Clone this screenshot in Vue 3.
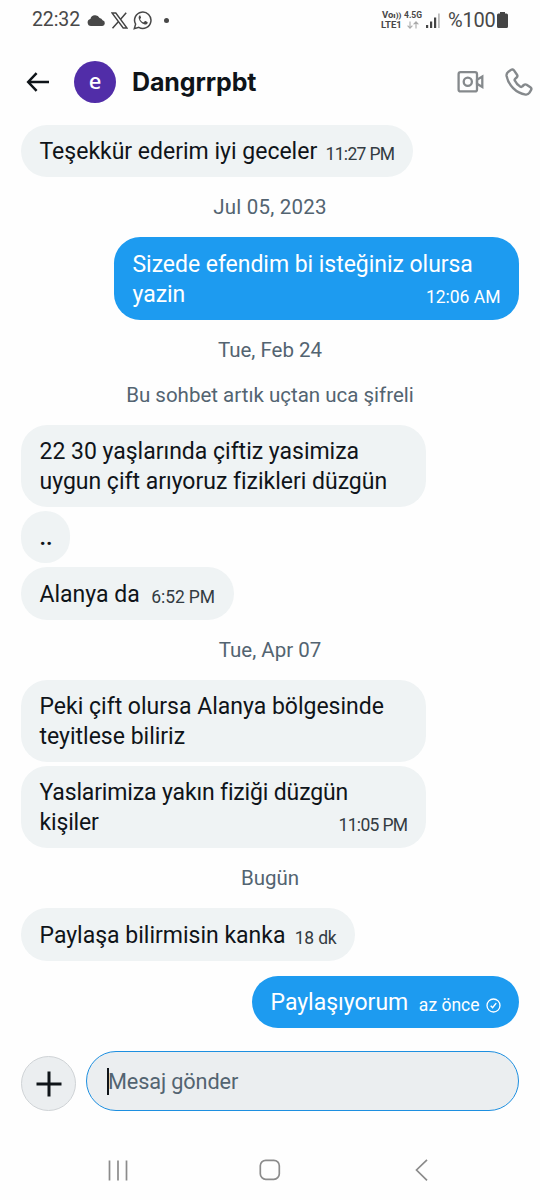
<script setup>
// `ls` / `tls` are tracking values in px for the message text and its timestamp.
const feed = [
  { items: [{ lines: ['Teşekkür ederim iyi geceler'], time: '11:27 PM', tls: -0.65, w: 392 }] },
  { date: 'Jul 05, 2023', ls: 0.2 },
  { own: true, items: [{ lines: ['Sizede efendim bi isteğiniz olursa', 'yazin'], ls: -0.04, time: '12:06 AM', w: 405 }] },
  { date: 'Tue, Feb 24' },
  { date: 'Bu sohbet artık uçtan uca şifreli' },
  {
    items: [
      { lines: ['22 30 yaşlarında çiftiz yasimiza', 'uygun çift arıyoruz fizikleri düzgün'], ls: -0.01, w: 405 },
      { lines: ['..'], w: 49, bold: true },
      { lines: ['Alanya da'], time: '6:52 PM', tls: -0.1, w: 212.5 },
    ],
  },
  { date: 'Tue, Apr 07' },
  {
    items: [
      { lines: ['Peki çift olursa Alanya bölgesinde', 'teyitlese biliriz'], w: 405 },
      { lines: ['Yaslarimiza yakın fiziği düzgün', 'kişiler'], ls: -0.15, time: '11:05 PM', tls: -0.65, w: 405 },
    ],
  },
  { date: 'Bugün' },
  { items: [{ lines: ['Paylaşa bilirmisin kanka'], time: '18 dk', tls: -0.2, w: 334 }] },
  { own: true, items: [{ lines: ['Paylaşıyorum'], time: 'az önce', sent: true, w: 267 }] },
]
</script>

<template>
  <div class="screen">
    <div class="status">
      <span class="clock">22:32</span>
      <svg class="cloud" width="18" height="11" viewBox="0 0 18 11"><path d="M4 11a3.6 3.6 0 0 1-.6-7.1A5 5 0 0 1 12.6 3a4 4 0 0 1 3 2.3A2.9 2.9 0 0 1 15.3 11z" fill="#484848" /></svg>
      <svg class="xlogo" width="17" height="17" viewBox="0 0 17 17" fill="none" stroke="#444"><path d="M1 1h3.8l11.2 15h-3.8z" stroke-width="1.4" /><path d="M15.2.8 9.4 7.4M7.3 9.8 1.5 16.2" stroke-width="1.5" /></svg>
      <svg class="wa" width="20" height="20" viewBox="0 0 20 20"><path d="M1.3 18.7l1.3-4.5a8.2 8.2 0 1 1 3.2 3.2z" fill="none" stroke="#484848" stroke-width="1.5" /><path d="M6.9 5.3c-.9.5-1.5 1.6-1.2 2.9.7 3.2 3.2 5.5 6.3 6.2 1.2.2 2.4-.5 2.7-1.5.1-.5 0-.8-.4-1l-1.7-.8c-.4-.2-.7-.1-.9.2l-.6.8c-.2.2-.4.3-.7.2-1.4-.6-2.5-1.6-3.2-2.9-.1-.3-.1-.5.1-.7l.6-.7c.1-.2.2-.4.1-.7l-.8-1.8c-.1-.3-.2-.3-.3-.2z" fill="#484848" /></svg>
      <i class="dot"></i>
      <div class="net volte"><span>Vo<b>ı))</b></span><span>LTE1</span></div>
      <div class="net gen">
        <span>4.5G</span>
        <svg width="12" height="8" viewBox="0 0 12 8" fill="none" stroke="#aaa" stroke-width="1.1"><path d="M3 .5v6.5M.6 4.7 3 7.2l2.4-2.5M9 7.5V1M6.6 3.3 9 .8l2.4 2.5" /></svg>
      </div>
      <svg class="signal" width="14" height="15" viewBox="0 0 14 15"><path d="M0 12h2.2v3H0zM4 8.5h2.2V15H4zM8 4.5h2.2V15H8z" fill="#444" /><path d="M12 .5h1.8V15H12z" fill="#bbb" /></svg>
      <span class="percent">%100</span>
      <svg class="battery" width="11" height="16" viewBox="0 0 11 16"><path d="M3 0h5v1.6h1.5A1.5 1.5 0 0 1 11 3.1v11.4A1.5 1.5 0 0 1 9.5 16h-8A1.5 1.5 0 0 1 0 14.5V3.1a1.5 1.5 0 0 1 1.5-1.5H3z" fill="#444" /></svg>
    </div>

    <header class="header">
      <svg class="back" width="24" height="20" viewBox="0 0 24 20" fill="none" stroke="#0f1419" stroke-width="2.5"><path d="M10.6 1.2 2.2 10l8.4 8.8M2.2 10H23" /></svg>
      <div class="avatar">e</div>
      <h1>Dangrrpbt</h1>
      <svg class="video" width="28" height="24" viewBox="0 0 28 24" fill="none" stroke="#85898c" stroke-width="2.3"><rect x="1.6" y="2.2" width="18.4" height="19.2" rx="2" /><circle cx="10.8" cy="11.8" r="4.1" /><path d="M20 9.8 25.3 6.6v10.4L20 13.8z" /></svg>
      <svg class="phone" width="28" height="29" viewBox="0 0 28 29" fill="none" stroke="#85898c" stroke-width="2.4" stroke-linejoin="round"><path d="M3.4 3.8 6 1.9c1-.7 2.3-.5 3 .5l3 4.3c.6.9.4 2.1-.4 2.8l-1.5 1.3c-.5.5-.6 1.2-.3 1.8 1.2 2.6 3.1 4.7 5.6 6.1.6.3 1.3.3 1.8-.2l1.6-1.5c.8-.7 1.9-.8 2.8-.2l3.8 2.5c1 .7 1.2 1.9.6 2.9l-1.5 2.5c-.9 1.4-2.3 2.1-3.9 1.9C10.9 25.2 3.4 17 1.6 8c-.3-1.7.4-3.2 1.8-4.2z" /></svg>
    </header>

    <main class="feed">
      <template v-for="(g, i) in feed" :key="i">
        <p v-if="g.date" class="date" :style="{ letterSpacing: (g.ls || 0) + 'px' }">{{ g.date }}</p>
        <div v-else class="group" :class="{ own: g.own }">
          <div v-for="(m, j) in g.items" :key="j" class="bubble" :style="{ width: m.w + 'px' }">
            <div class="text" :class="{ bold: m.bold }" :style="{ letterSpacing: (m.ls || 0) + 'px' }">
              <span v-for="l in m.lines" :key="l">{{ l }}</span>
            </div>
            <div v-if="m.time" class="time">
              <span :style="{ letterSpacing: (m.tls || 0) + 'px' }">{{ m.time }}</span>
              <svg v-if="m.sent" width="15" height="15" viewBox="0 0 15 15" fill="none" stroke="#fff" stroke-width="1.3"><circle cx="7.5" cy="7.5" r="6.5" /><path d="m4.7 7.8 1.9 1.9 3.6-4.6" stroke-width="1.5" /></svg>
            </div>
          </div>
        </div>
      </template>
    </main>

    <div class="composer">
      <div class="add"><svg width="26" height="26" viewBox="0 0 26 26" stroke="#0f1419" stroke-width="3"><path d="M13 .5v25M.5 13h25" /></svg></div>
      <div class="input"><i class="caret"></i><span>Mesaj gönder</span></div>
    </div>

    <nav class="nav">
      <svg width="20" height="21" viewBox="0 0 20 21" stroke="#8b8b8b" stroke-width="1.7"><path d="M1.5.5v20M10 .5v20M18.5.5v20" /></svg>
      <svg width="22" height="22" viewBox="0 0 22 22" fill="none" stroke="#8b8b8b" stroke-width="1.7"><rect x="1.3" y="1.3" width="19" height="19" rx="5.5" /></svg>
      <svg width="13" height="22" viewBox="0 0 13 22" fill="none" stroke="#8b8b8b" stroke-width="1.7"><path d="M12 .8 1.5 11 12 21.3" /></svg>
    </nav>
  </div>
</template>

<style scoped>
.screen {
  width: 540px;
  height: 1200px;
  display: flex;
  flex-direction: column;
  background: #fefefe;
  font-family: Roboto, "Noto Sans", sans-serif;
  color: #0f1419;
  overflow: hidden;
}
svg { display: block; flex: none; }
.status {
  height: 40px;
  flex: none;
  box-sizing: border-box;
  padding-left: 32px;
  display: flex;
  align-items: center;
  color: #484848;
}
.clock { width: 55px; font-size: 19.5px; line-height: 40px; letter-spacing: -0.1px; }
.xlogo { margin-left: 6px; }
.wa { margin-left: 5px; }
.dot { width: 5px; height: 5px; margin-left: 11px; border-radius: 50%; background: #484848; }
.net { display: flex; flex-direction: column; font-size: 9.5px; line-height: 8.5px; font-weight: 700; white-space: nowrap; }
.volte { width: 20px; margin-left: 212px; }
.volte b { font-size: 8px; }
.volte span:first-child { padding-left: 1px; }
.gen { width: 18px; margin-left: 3px; font-size: 8.5px; align-items: center; }
.gen svg { margin-top: 1px; }
.signal { margin-left: 4px; }
.percent { width: 49px; margin-left: 8px; font-size: 20px; letter-spacing: -0.2px; }
.header { height: 84.8px; flex: none; display: flex; align-items: center; padding-left: 26px; }
.avatar {
  width: 42px;
  height: 42px;
  margin-left: 24px;
  border-radius: 50%;
  background: #512da8;
  color: #fff;
  font: 500 22px/38px "Noto Sans", sans-serif;
  text-align: center;
}
h1 { width: 325px; margin: 0 0 0 16px; font: 700 25px/30px Inter, sans-serif; letter-spacing: -0.1px; }
.video { margin-left: 0; }
.phone { margin-left: 20px; }
.feed { height: 926.6px; flex: none; padding: 0 21px; display: flex; flex-direction: column; gap: 15px; }
.date { margin: 0; font-size: 20.5px; line-height: 31px; height: 30px; text-align: center; color: #536471; }
.group { display: flex; flex-direction: column; align-items: flex-start; gap: 3.7px; }
.own { align-items: flex-end; }
.bubble {
  box-sizing: border-box;
  padding: 12.5px 18.5px 10px;
  border-radius: 26.25px;
  display: flex;
  justify-content: space-between;
  align-items: flex-end;
  background: #eff3f4;
}
.own .bubble { background: #1d9bf0; color: #fff; }
.text { flex: none; width: 0; font-size: 23px; line-height: 30px; }
.bold { font-weight: 600; }
.text span { display: block; white-space: nowrap; width: max-content; }
.time { display: flex; align-items: center; gap: 6px; margin-bottom: 1px; font-size: 17.5px; line-height: 24px; color: #333b42; white-space: nowrap; }
.own .time { color: #fff; }
.composer { height: 60px; flex: none; display: flex; padding: 0 21px; gap: 10px; align-items: flex-end; }
.add {
  width: 55px;
  height: 55px;
  box-sizing: border-box;
  border: 1px solid #cfd3d6;
  border-radius: 50%;
  background: #ebeef0;
  display: flex;
  align-items: center;
  justify-content: center;
}
.input {
  width: 433px;
  height: 60px;
  box-sizing: border-box;
  border: 1px solid #1d8fe0;
  border-radius: 30px;
  background: #ebeef0;
  display: flex;
  align-items: center;
  padding-left: 20px;
  font-size: 21.7px;
  letter-spacing: -0.12px;
  color: #536471;
}
.caret { width: 2px; height: 27px; margin-right: -1px; background: #0f1419; }
.nav { margin-top: 48px; display: flex; align-items: center; padding-left: 108px; }
.nav svg:nth-child(2) { margin-left: 131px; }
.nav svg:nth-child(3) { margin-left: 134px; }
</style>

<style>
html, body { margin: 0; background: #fefefe; }
</style>
